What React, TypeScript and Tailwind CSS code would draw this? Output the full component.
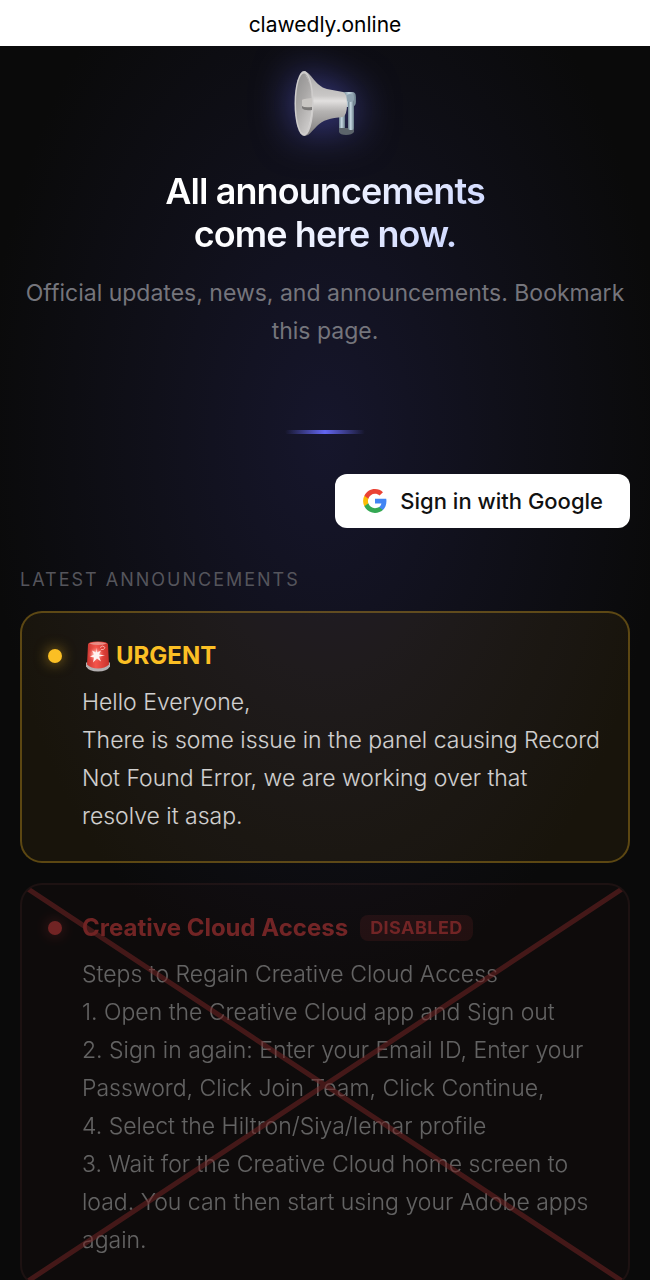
import type { ReactNode } from "react";

function Horn() {
  return (
    <svg
      viewBox="0 0 64 68"
      className="h-17 w-16 drop-shadow-[0_0_20px_rgba(99,102,241,0.6)]"
      role="img"
      aria-label="Loudspeaker"
    >
      <defs>
        <linearGradient id="bell" x1="0" y1="0" x2="0" y2="1">
          <stop offset="0" stopColor="#a9a8a8" />
          <stop offset="0.38" stopColor="#c9c7c6" />
          <stop offset="0.46" stopColor="#e2e0df" />
          <stop offset="0.62" stopColor="#b5b3b2" />
          <stop offset="1" stopColor="#7d7b7b" />
        </linearGradient>
        <linearGradient id="mouth" x1="0" y1="0" x2="0.6" y2="1">
          <stop offset="0" stopColor="#8f8e8e" />
          <stop offset="0.5" stopColor="#a9a7a6" />
          <stop offset="1" stopColor="#cbc9c8" />
        </linearGradient>
        <linearGradient id="steel" x1="0" y1="0" x2="1" y2="0">
          <stop offset="0" stopColor="#6b808d" />
          <stop offset="0.45" stopColor="#c6d8e2" />
          <stop offset="1" stopColor="#667986" />
        </linearGradient>
      </defs>
      <path d="M50 22h9q4 0 4 5v5q0 4-4 5h-9z" fill="url(#steel)" />
      <rect x="46" y="40" width="6" height="21" rx="1" fill="url(#steel)" />
      <path d="M46 58h15v4q-2 3-8 3t-7-3z" fill="#5c646b" />
      <rect x="55" y="30" width="6" height="30" rx="2" fill="url(#steel)" />
      <circle cx="57" cy="28" r="4" fill="#8fa3b0" />
      <path
        d="M11 1c7 1 11 15 23 18l16 3q4 1 4 12t-4 13c-13 1-20 3-26 9S16 66 11 66z"
        fill="url(#bell)"
      />
      <ellipse cx="11" cy="33.5" rx="9.5" ry="32.5" fill="#cfcdcc" />
      <ellipse cx="11" cy="33.5" rx="8" ry="30" fill="url(#mouth)" />
      <path d="M12 4c9 8 9 50 0 59q7-8 7-29T12 4z" fill="#dddbda" />
      <path d="M9 30q0-1 10-2v11q-10 0-10-2z" fill="#c9c6c3" />
      <path d="M9 36q2 2 10 1v3q-8 1-10-2z" fill="#7b7978" />
    </svg>
  );
}

function Siren() {
  return (
    <svg viewBox="0 0 24 31" className="h-8 w-6" role="img" aria-label="Siren">
      <defs>
        <linearGradient id="lamp" x1="0" y1="0" x2="1" y2="0">
          <stop offset="0" stopColor="#c93630" />
          <stop offset="0.4" stopColor="#f4554b" />
          <stop offset="1" stopColor="#c8302a" />
        </linearGradient>
        <radialGradient id="flash">
          <stop offset="0" stopColor="#fff" />
          <stop offset="0.4" stopColor="#ffb3a8" stopOpacity="0.8" />
          <stop offset="1" stopColor="#f4554b" stopOpacity="0" />
        </radialGradient>
      </defs>
      <path d="M0 22h24v4q-3 5-12 5T0 26z" fill="#b3afb0" />
      <path d="M2 4q0-3 10-3t10 3l1 20q-4 4-11 4T1 24z" fill="url(#lamp)" />
      <path d="M3 3q9-3 18 0-9 3-18 0z" fill="#e98d86" />
      <circle cx="10" cy="14" r="8" fill="url(#flash)" />
      <path d="M10 7l1 5 4-2-2 4 6 1-6 1 2 5-4-3-4 4 1-5-4-1 4-2-2-4 4 2z" fill="#fff3f0" />
      <path d="M14 7q3-3 5 0-1 3-4 2" fill="none" stroke="#f9a79f" strokeWidth="1" />
    </svg>
  );
}

function GoogleLogo() {
  return (
    <svg viewBox="0 0 24 24" className="size-[26px]" aria-hidden="true">
      <path
        fill="#4285F4"
        d="M22.56 12.25c0-.78-.07-1.53-.2-2.25H12v4.26h5.92c-.26 1.37-1.04 2.53-2.21 3.31v2.77h3.57c2.08-1.92 3.28-4.74 3.28-8.09z"
      />
      <path
        fill="#34A853"
        d="M12 23c2.97 0 5.46-.98 7.28-2.66l-3.57-2.77c-.98.66-2.23 1.06-3.71 1.06-2.86 0-5.29-1.93-6.16-4.53H2.18v2.84C3.99 20.53 7.7 23 12 23z"
      />
      <path
        fill="#FBBC05"
        d="M5.84 14.09c-.22-.66-.35-1.36-.35-2.09s.13-1.43.35-2.09V7.07H2.18C1.43 8.55 1 10.22 1 12s.43 3.45 1.18 4.93l3.66-2.84z"
      />
      <path
        fill="#EA4335"
        d="M12 5.38c1.62 0 3.06.56 4.21 1.64l3.15-3.15C17.45 2.09 14.97 1 12 1 7.7 1 3.99 3.47 2.18 7.07l3.66 2.84c.87-2.6 3.3-4.53 6.16-4.53z"
      />
    </svg>
  );
}

const urgentLines = [
  "Hello Everyone,",
  "There is some issue in the panel causing Record Not Found Error, we are working over that resolve it asap.",
];

const accessLines = [
  "Steps to Regain Creative Cloud Access",
  "1. Open the Creative Cloud app and Sign out",
  "2. Sign in again: Enter your Email ID, Enter your Password, Click Join Team, Click Continue,",
  "4. Select the Hiltron/Siya/lemar profile",
  "3. Wait for the Creative Cloud home screen to load. You can then start using your Adobe apps again.",
];

type CardProps = {
  title: ReactNode;
  lines: string[];
  disabled?: boolean;
};

function AnnouncementCard({ title, lines, disabled }: CardProps) {
  return (
    <article
      className={
        disabled
          ? "relative flex gap-5 overflow-hidden rounded-[22px] border-2 border-[#f87171]/15 bg-[#f87171]/4 px-[26px] pt-6 pb-[26px] opacity-45"
          : "relative flex gap-5 overflow-hidden rounded-[22px] border-2 border-[#fbbf24]/30 bg-[#fbbf24]/6 px-[26px] pt-6 pb-[26px]"
      }
    >
      <span
        className={
          disabled
            ? "mt-3 size-[14px] shrink-0 rounded-full bg-[#ef4444] shadow-[0_0_14px_#ef444499]"
            : "mt-3 size-[14px] shrink-0 rounded-full bg-[#fbbf24] shadow-[0_0_14px_#fbbf2499]"
        }
      />
      <div className="min-w-0 flex-1">
        <h2
          className={
            disabled
              ? "flex items-center gap-3 text-2xl/[38px] font-bold text-[#ef4444]"
              : "flex items-center gap-[6px] pl-1 text-2xl/[38px] font-bold text-[#fbbf24]"
          }
        >
          {title}
        </h2>
        <div className="mt-2 text-[23px]/[38px] font-light text-white/80">
          {lines.map((line) => (
            <p key={line}>{line}</p>
          ))}
        </div>
      </div>
      {disabled && (
        <svg
          className="pointer-events-none absolute inset-0 size-full"
          preserveAspectRatio="none"
          viewBox="0 0 100 100"
          aria-hidden="true"
        >
          <path
            d="M0 0L100 100M100 0L0 100"
            stroke="#ef4444"
            strokeOpacity="0.55"
            strokeWidth="5"
            vectorEffect="non-scaling-stroke"
          />
        </svg>
      )}
    </article>
  );
}

export default function App() {
  return (
    <div className="min-h-screen bg-[#0a0a0a] font-['Inter',sans-serif] text-white">
      <header className="flex h-[46px] items-center justify-center bg-white pt-1 text-[21px] text-black">
        clawedly.online
      </header>

      <main className="bg-[radial-gradient(ellipse_340px_560px_at_50%_390px,#16162c,#10101a_50%,#0a0a0a)] px-5 pt-6 pb-10">
        <section className="flex flex-col items-center text-center">
          <Horn />
          <h1 className="mt-8 bg-linear-135 from-white from-30% to-[#c7d2fe] bg-clip-text text-4xl/[43px] font-semibold tracking-tight text-transparent">
            All announcements
            <br />
            come here now.
          </h1>
          <p className="mt-[18px] text-[23px]/[38px] text-[#75757c]">
            Official updates, news, and announcements. Bookmark this page.
          </p>
          <div className="mt-20 h-1 w-20 rounded-full bg-linear-to-r from-transparent via-[#6366f1] to-transparent" />
        </section>

        <div className="mt-10 flex justify-end">
          <button
            type="button"
            className="flex h-[54px] items-center gap-3 rounded-xl bg-white px-[27px] text-[22px] font-medium text-[#111111]"
          >
            <GoogleLogo />
            Sign in with Google
          </button>
        </div>

        <section className="mt-9">
          <h2 className="text-lg/8 tracking-[2px] text-[#55555c]">LATEST ANNOUNCEMENTS</h2>
          <div className="mt-[15px] flex flex-col gap-5">
            <AnnouncementCard
              title={
                <>
                  <Siren />
                  URGENT
                </>
              }
              lines={urgentLines}
            />
            <AnnouncementCard
              disabled
              title={
                <>
                  Creative Cloud Access
                  <span className="rounded-lg bg-[#ef4444]/20 px-[10px] text-lg/[26px] tracking-wide">
                    DISABLED
                  </span>
                </>
              }
              lines={accessLines}
            />
          </div>
        </section>
      </main>
    </div>
  );
}
